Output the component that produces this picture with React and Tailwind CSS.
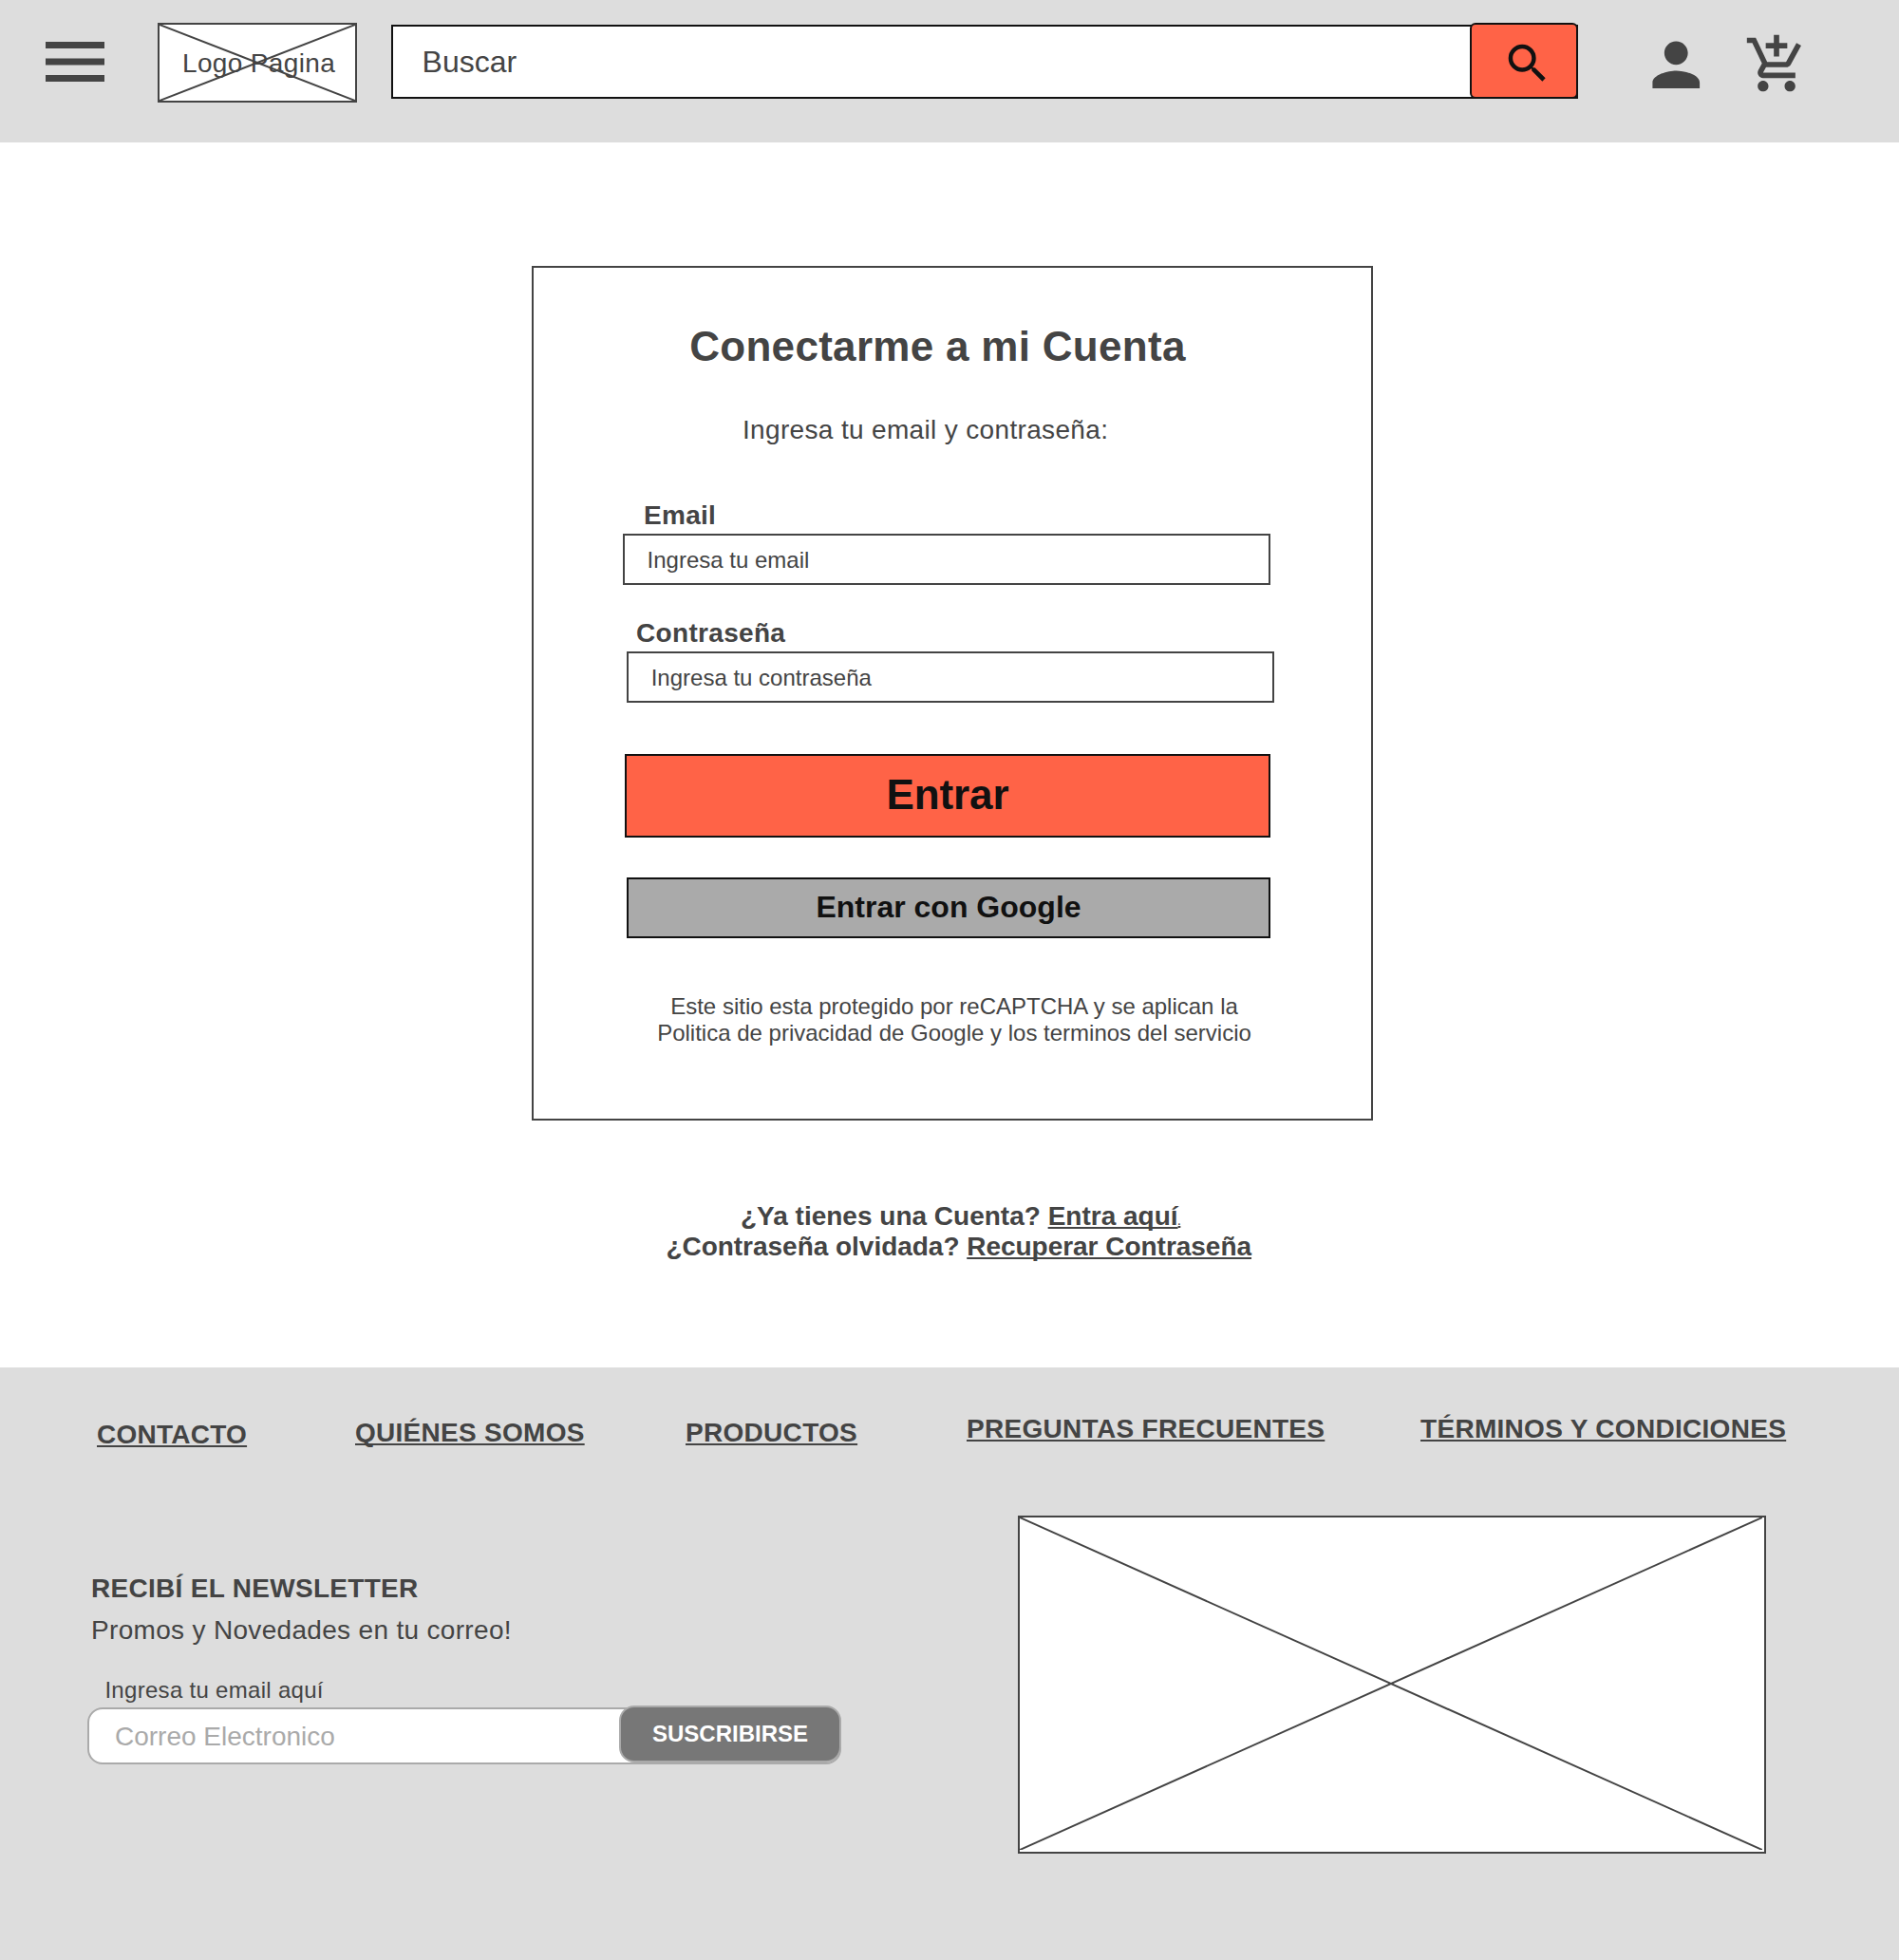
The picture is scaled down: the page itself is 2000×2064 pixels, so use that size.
import React from "react";
import { MdSearch, MdPerson } from "react-icons/md";

function CartIcon({ className }) {
  return (
    <svg viewBox="0 0 24 24" fill="currentColor" className={className}>
      <path d="M11 9h2V6h3V4h-3V1h-2v3H8v2h3v3zm-4 9c-1.1 0-1.99.9-1.99 2S5.9 22 7 22s2-.9 2-2-.9-2-2-2zm10 0c-1.1 0-1.99.9-1.99 2s.89 2 1.99 2 2-.9 2-2-.9-2-2-2zm-8.9-5h7.45c.75 0 1.41-.41 1.75-1.03l3.86-7.01L19.42 4l-3.87 7H8.53L4.27 2H1v2h2l3.6 7.59-1.35 2.45C4.52 15.37 5.48 17 7 17h12v-2H7l1.1-2z" />
    </svg>
  );
}

function Cross({ width, height, className }) {
  return (
    <svg
      width={width}
      height={height}
      viewBox={`0 0 ${width} ${height}`}
      stroke="#444444"
      strokeWidth="2"
      className={className}
    >
      <line x1="0" y1="0" x2={width} y2={height} />
      <line x1={width} y1="0" x2="0" y2={height} />
    </svg>
  );
}

const underline =
  "underline decoration-2 underline-offset-2 [text-decoration-skip-ink:none]";

const footerLinks = [
  { label: "CONTACTO", className: "ml-[102px] mt-[55px] w-[272px] tracking-[0.25px]" },
  { label: "QUIÉNES SOMOS", className: "mt-[53px] w-[348px] tracking-[0.28px]" },
  { label: "PRODUCTOS", className: "mt-[53px] w-[296px] tracking-[0.3px]" },
  { label: "PREGUNTAS FRECUENTES", className: "mt-[49px] w-[478px] tracking-[0.3px]" },
  { label: "TÉRMINOS Y CONDICIONES", className: "mt-[49px] tracking-[0.3px]" },
];

function Header() {
  return (
    <header className="flex h-[150px] items-start bg-[#dddddd]">
      <svg
        viewBox="3 6 18 12"
        preserveAspectRatio="none"
        fill="currentColor"
        className="ml-12 mt-11 h-[42px] w-[62px]"
      >
        <path d="M3 18h18v-2H3v2zm0-5h18v-2H3v2zm0-7v2h18V6H3z" />
      </svg>
      <div className="relative ml-14 mt-6 h-[84px] w-[210px] border-2 border-[#444444] bg-white pl-6 pt-[25px]">
        <span className="block whitespace-nowrap text-[28px] leading-8 tracking-[0.35px]">Logo Pagina</span>
        <Cross width={206} height={80} className="absolute left-0 top-0" />
      </div>
      <div className="ml-9 mt-[26px] flex h-[78px] w-[1250px] items-start border-2 border-[#111111] bg-white">
        <span className="pl-[30.6px] pt-[19px] text-[32px] leading-9">Buscar</span>
        <button className="-mr-0.5 -mt-1 ml-auto h-20 w-[114px] rounded-md border-2 border-[#111111] bg-[#ff6347] pl-8 pt-[5.5px] text-[#111111]">
          <MdSearch className="size-[53.5px]" />
        </button>
      </div>
      <MdPerson className="ml-[65.5px] mt-[30.5px] size-[74.5px]" />
      <CartIcon className="ml-[35.2px] mt-[34.2px] size-[68px]" />
    </header>
  );
}

function LoginCard() {
  return (
    <section className="ml-[560px] mt-[130px] h-[900px] w-[886px] border-2 border-[#444444]">
      <h1 className="ml-[164.2px] mt-[58px] text-[44px] font-bold leading-[50px] tracking-[0.3px]">
        Conectarme a mi Cuenta
      </h1>
      <p className="ml-[220px] mt-[47px] text-[28px] leading-8 tracking-[0.34px]">
        Ingresa tu email y contraseña:
      </p>
      <label className="ml-[116px] mt-[58px] block text-[28px] font-bold leading-8 tracking-[0.3px]">
        Email
      </label>
      <div className="ml-[94px] mt-[3px] h-[54px] w-[682px] border-2 border-[#444444] pl-[23.6px] pt-3 text-2xl leading-7">
        Ingresa tu email
      </div>
      <label className="ml-[108px] mt-[35px] block text-[28px] font-bold leading-8 tracking-[0.32px]">
        Contraseña
      </label>
      <div className="ml-[98px] mt-[3px] h-[54px] w-[682px] border-2 border-[#444444] pl-[23.7px] pt-3 text-2xl leading-7">
        Ingresa tu contraseña
      </div>
      <button className="ml-24 mt-[54px] block h-[88px] w-[680px] border-2 border-[#111111] bg-[#ff6347] pb-0.5 text-[44px] font-bold leading-[50px] tracking-[-0.1px] text-[#111111]">
        Entrar
      </button>
      <button className="ml-[98px] mt-[42px] block h-16 w-[678px] border-2 border-[#111111] bg-[#aaaaaa] pb-0.5 text-[32px] font-bold leading-9 text-[#111111]">
        Entrar con Google
      </button>
      <p className="mt-[58px] pl-1 text-center text-2xl leading-7">
        Este sitio esta protegido por reCAPTCHA y se aplican la
        <br />
        Politica de privacidad de Google y los terminos del servicio
      </p>
    </section>
  );
}

function Footer() {
  return (
    <footer className="h-[624px] bg-[#dddddd]">
      <nav className="flex h-[156px] items-start text-[28px] font-bold leading-8">
        {footerLinks.map(({ label, className }) => (
          <div key={label} className={`shrink-0 whitespace-nowrap ${className}`}>
            <a className={underline}>{label}</a>
          </div>
        ))}
      </nav>
      <div className="flex items-start">
        <div className="ml-[92px] w-[794px] pt-[61px]">
          <h2 className="ml-1 text-[28px] font-bold leading-8 tracking-[0.3px]">RECIBÍ EL NEWSLETTER</h2>
          <p className="ml-1 mt-3 text-[28px] leading-8 tracking-[0.32px]">
            Promos y Novedades en tu correo!
          </p>
          <label className="ml-[18.4px] mt-[33px] block text-2xl leading-7 tracking-[0.3px]">
            Ingresa tu email aquí
          </label>
          <div className="mt-1 flex h-[60px] items-start rounded-2xl border-2 border-[#aaaaaa] bg-white">
            <span className="pl-[27px] pt-[13px] text-[28px] leading-8 text-[#aaaaaa]">Correo Electronico</span>
            <button className="-mr-0.5 -mt-1 ml-auto h-[60px] w-[234px] rounded-2xl border-2 border-[#aaaaaa] bg-[#777777] text-2xl font-bold leading-7 text-white">
              SUSCRIBIRSE
            </button>
          </div>
        </div>
        <div className="ml-[186px] h-[356px] w-[788px] border-2 border-[#444444] bg-white">
          <Cross width={782} height={350} />
        </div>
      </div>
    </footer>
  );
}

export default function App() {
  return (
    <div className="h-[2064px] w-[2000px] overflow-hidden bg-white font-['Liberation_Sans',sans-serif] text-[#444444]">
      <Header />
      <main className="flex h-[1290px] flex-col">
        <LoginCard />
        <div className="mt-[85px] whitespace-nowrap text-[28px] font-bold leading-8">
          <p className="ml-[780px] h-8">
            ¿Ya tienes una Cuenta? <a className={underline}>Entra aquí</a>
            <span className="text-[10px] leading-none underline decoration-2 underline-offset-1">.</span>
          </p>
          <p className="ml-[701.4px] tracking-[-0.026px]">
            ¿Contraseña olvidada? <a className={underline}>Recuperar Contraseña</a>
          </p>
        </div>
      </main>
      <Footer />
    </div>
  );
}
